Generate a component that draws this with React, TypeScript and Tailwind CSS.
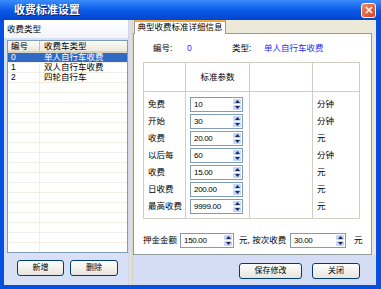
import React from 'react';

const FONT = { fontFamily: '"Liberation Sans", "Noto Sans CJK SC", sans-serif' };

const Arrow: React.FC<{ up?: boolean }> = ({ up }) => (
    <svg width="5" height="3" viewBox="0 0 5 3" className="block">
        {up ? <polygon points="2.5,0 5,3 0,3" fill="#1c2a5a" /> : <polygon points="0,0 5,0 2.5,3" fill="#1c2a5a" />}
    </svg>
);

const Spin: React.FC<{ value: string; w?: string }> = ({ value, w = 'w-[53px]' }) => (
    <div className={`${w} h-[15px] flex items-stretch border border-[#7f9db9] bg-white`}>
        <span className="flex-1 pl-[3px] text-[8px] leading-[13px] text-black tracking-[-0.3px]">{value}</span>
        <div className="w-[10px] flex flex-col gap-px p-px">
            <div className="flex-1 rounded-[1px] bg-[#c6d5fb] flex items-center justify-center"><Arrow up /></div>
            <div className="flex-1 rounded-[1px] bg-[#c6d5fb] flex items-center justify-center"><Arrow /></div>
        </div>
    </div>
);

const XpButton: React.FC<{ label: string; w: string }> = ({ label, w }) => (
    <button className={`${w} h-[16px] rounded-[3px] border border-[#003c74] bg-gradient-to-b from-white to-[#e6e4dc] text-[8px] leading-[14px] text-black`}>
        {label}
    </button>
);

const rows = [
    { id: '0', name: '单人自行车收费' },
    { id: '1', name: '双人自行车收费' },
    { id: '2', name: '四轮自行车' },
];

const params = [
    { label: '免费', value: '10', unit: '分钟' },
    { label: '开始', value: '30', unit: '分钟' },
    { label: '收费', value: '20.00', unit: '元' },
    { label: '以后每', value: '60', unit: '分钟' },
    { label: '收费', value: '15.00', unit: '元' },
    { label: '日收费', value: '200.00', unit: '元' },
    { label: '最高收费', value: '9999.00', unit: '元' },
];

export default function App() {
    return (
        <div className="w-[381px] h-[289px] flex flex-col overflow-hidden bg-[#0550e0]" style={FONT}>
            {/* title bar */}
            <div className="h-[20px] flex items-center bg-gradient-to-b from-[#3b8dfb] via-[#0a5ae8] to-[#0344d0]">
                <span className="pl-[14px] text-[11px] font-bold text-white [text-shadow:1px_1px_0_#0a1e6e]">收费标准设置</span>
                <div className="ml-auto mr-[5px] w-[15px] h-[15px] rounded-[3px] border border-white bg-gradient-to-br from-[#f08a6a] to-[#d6401c] flex items-center justify-center">
                    <svg width="8" height="8" viewBox="0 0 8 8">
                        <path d="M1 1 L7 7 M7 1 L1 7" stroke="white" strokeWidth="1.6" />
                    </svg>
                </div>
            </div>

            <div className="flex-1 flex ml-[4px] mr-[5px] mb-[4px]">
                {/* left panel */}
                <div className="w-[124px] flex flex-col bg-[#d8e0f6]">
                    <div className="h-[18px] bg-gradient-to-b from-white to-[#f3f5fb] flex items-center pl-[3px] text-[8.5px] text-black">收费类型</div>
                    <div className="mt-[2px] ml-[3px] w-[121px] h-[213px] border border-[#7f9db9] bg-white overflow-hidden">
                        <div className="h-[12px] flex text-[8.5px] leading-[10px] text-black bg-gradient-to-b from-[#fbfaf6] to-[#ebe9dc] border-b-2 border-[#d8d4c4]">
                            <div className="w-[32px] pl-[3px] border-r border-[#c5c1b1]">编号</div>
                            <div className="pl-[4px]">收费车类型</div>
                        </div>
                        {Array.from({ length: 20 }).map((_, i) => {
                            const r = rows[i];
                            const sel = i === 0;
                            return (
                                <div key={i} className={`h-[10px] flex text-[8.5px] leading-[9px] border-b border-[#f1efe2] ${sel ? 'bg-[#316ac5] text-white' : 'text-black'}`}>
                                    <div className={`w-[32px] pl-[3px] ${sel ? '' : 'border-r border-[#f1efe2]'}`}>{r?.id}</div>
                                    <div className="pl-[4px]">{r?.name}</div>
                                </div>
                            );
                        })}
                    </div>
                    <div className="flex gap-[6px] pl-[13px] pt-[7px]">
                        <XpButton label="新增" w="w-[47px]" />
                        <XpButton label="删除" w="w-[48px]" />
                    </div>
                </div>

                {/* splitter */}
                <div className="w-[5px] bg-gradient-to-r from-[#c9d6f5] via-[#e4e2da] to-[#d4d0c8]" />

                {/* right panel */}
                <div className="flex-1 flex flex-col bg-[#ece9d8]">
                    <div className="h-[13px] flex">
                        <div className="ml-px w-[92px] h-[14px] bg-white border-t-2 border-t-[#f0a836] border-x border-x-[#919b9c] text-[8.5px] leading-[11px] text-center text-black z-10">
                            典型收费标准详细信息
                        </div>
                    </div>
                    <div className="h-[222px] mr-[4px] border border-[#919b9c] bg-white flex flex-col">
                        <div className="mt-[9px] h-[10px] flex items-center text-[8.5px]">
                            <span className="ml-[19px] w-[34px] text-black">编号:</span>
                            <span className="w-[45px] text-[#2a2aff]">0</span>
                            <span className="w-[32px] text-black">类型:</span>
                            <span className="text-[#2a2aff]">单人自行车收费</span>
                        </div>
                        <div className="mt-[9px] ml-[9px] w-[217px] grid grid-cols-[41px_63px_62px_46px] grid-rows-[28px_126px] gap-px p-px bg-[#d2cec6]">
                            <div className="bg-white" />
                            <div className="bg-white flex items-center justify-center text-[8.5px] text-black">标准参数</div>
                            <div className="bg-white" />
                            <div className="bg-white" />
                            <div className="bg-white flex flex-col gap-[2px] pt-[5px] pl-[4px]">
                                {params.map((p, i) => (
                                    <div key={i} className="h-[15px] flex items-center text-[8.5px] text-black whitespace-nowrap">{p.label}</div>
                                ))}
                            </div>
                            <div className="bg-white flex flex-col gap-[2px] pt-[5px] pl-[4px]">
                                {params.map((p, i) => (
                                    <Spin key={i} value={p.value} />
                                ))}
                            </div>
                            <div className="bg-white" />
                            <div className="bg-white flex flex-col gap-[2px] pt-[5px] pl-[4px]">
                                {params.map((p, i) => (
                                    <div key={i} className="h-[15px] flex items-center text-[8.5px] text-black">{p.unit}</div>
                                ))}
                            </div>
                        </div>
                        <div className="mt-[14px] ml-[9px] h-[15px] flex items-center text-[8.5px] text-black">
                            <span className="w-[37px]">押金金额</span>
                            <Spin value="150.00" w="w-[54px]" />
                            <span className="ml-[5px] w-[51px]">元, 按次收费</span>
                            <Spin value="30.00" w="w-[56px]" />
                            <span className="ml-[8px]">元</span>
                        </div>
                    </div>
                    <div className="flex-1 bg-[#d5ddf5] flex justify-end gap-[10px] pr-[16px] pt-[8px]">
                        <XpButton label="保存修改" w="w-[63px]" />
                        <XpButton label="关闭" w="w-[48px]" />
                    </div>
                </div>
            </div>
        </div>
    );
}
